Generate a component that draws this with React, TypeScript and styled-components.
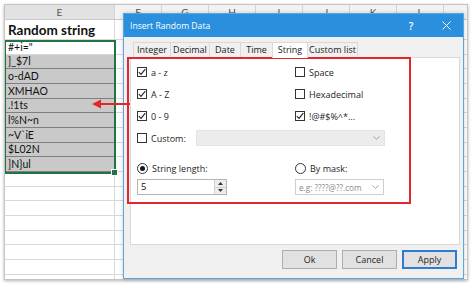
import React from 'react';
import styled, { createGlobalStyle } from 'styled-components';

const GlobalStyle = createGlobalStyle`
  html, body {
    margin: 0;
    padding: 0;
    background: #ffffff;
  }
  body {
    width: 474px;
    height: 288px;
    overflow: hidden;
    font-family: "Open Sans", "Noto Sans", sans-serif;
  }
`;

const Page = styled.div`
  position: relative;
  width: 474px;
  height: 288px;
  padding: 4px 6px 0 4px;
  box-sizing: border-box;
`;

/* ---------- spreadsheet behind the dialog ---------- */

const Sheet = styled.div`
  position: relative;
  width: 464px;
  height: 276px;
  border: 1px solid #c4c4c4;
  box-sizing: border-box;
  box-shadow: 0 1px 3px rgba(0, 0, 0, 0.3);
  overflow: hidden;
  background: #ffffff;
`;

const HeaderRow = styled.div`
  display: flex;
  height: 15px;
  background: #f3f3f3;
  border-bottom: 1px solid #c9c9c9;
  box-sizing: border-box;
`;

const HeaderCell = styled.div<{ $w: number; $active?: boolean }>`
  flex: 0 0 ${(p) => p.$w}px;
  box-sizing: border-box;
  border-right: 1px solid #d4d4d4;
  background: ${(p) => (p.$active ? '#e2e2e2' : 'transparent')};
  color: #555;
  font-family: "Lato", sans-serif;
  font-size: 10px;
  line-height: 14px;
  text-align: center;
`;

const Row = styled.div<{ $h: number }>`
  display: flex;
  height: ${(p) => p.$h}px;
`;

const Cell = styled.div<{ $w: number; $fill?: boolean; $title?: boolean }>`
  flex: 0 0 ${(p) => p.$w}px;
  box-sizing: border-box;
  padding-left: 3px;
  border-right: 1px solid ${(p) => (p.$fill ? '#9a9a9a' : '#d9d9d9')};
  border-bottom: 1px solid ${(p) => (p.$fill ? '#7f7f7f' : '#d9d9d9')};
  background: ${(p) => (p.$fill ? '#c9c9c9' : '#ffffff')};
  color: #111;
  font-family: "Lato", sans-serif;
  font-size: ${(p) => (p.$title ? '13.5px' : '10.5px')};
  font-weight: ${(p) => (p.$title ? 700 : 400)};
  display: flex;
  align-items: center;
  white-space: nowrap;
  overflow: hidden;
`;

const Selection = styled.div`
  position: absolute;
  left: -1px;
  top: 35px;
  width: 112px;
  height: 134px;
  border: 2px solid #217346;
  box-sizing: border-box;
  pointer-events: none;

  &::after {
    content: '';
    position: absolute;
    right: -4px;
    bottom: -4px;
    width: 5px;
    height: 5px;
    background: #217346;
    border: 1px solid #fff;
  }
`;

/* ---------- dialog ---------- */

const Dialog = styled.div`
  position: absolute;
  left: 123px;
  top: 13px;
  width: 341px;
  height: 266px;
  box-sizing: border-box;
  border: 1px solid #5aa7df;
  background: #f0f0f0;
  display: flex;
  flex-direction: column;
  box-shadow: 0 0 4px rgba(0, 0, 0, 0.2);
`;

const TitleBar = styled.div`
  height: 23px;
  flex: 0 0 23px;
  background: #2a8fdc;
  color: #fff;
  display: flex;
  align-items: center;
  padding-left: 6px;
  font-size: 8.6px;
`;

const TitleText = styled.span`
  flex: 1;
`;

const TitleButton = styled.span<{ $w: number }>`
  width: ${(p) => p.$w}px;
  display: flex;
  justify-content: center;
  align-items: center;
  font-size: 10px;
  font-weight: 600;
`;

const Body = styled.div`
  flex: 1;
  display: flex;
  flex-direction: column;
  padding: 5px 3px 0 6px;
`;

const TabStrip = styled.div`
  display: flex;
  align-items: flex-end;
  height: 15px;
  padding-left: 3px;
`;

const Tab = styled.div<{ $w: number; $active?: boolean }>`
  position: relative;
  width: ${(p) => p.$w}px;
  height: ${(p) => (p.$active ? 16 : 15)}px;
  margin-bottom: ${(p) => (p.$active ? -1 : 0)}px;
  margin-right: -1px;
  box-sizing: border-box;
  border: 1px solid #d9d9d9;
  border-bottom: none;
  background: ${(p) => (p.$active ? '#ffffff' : '#f0f0f0')};
  z-index: ${(p) => (p.$active ? 1 : 0)};
  font-size: 9px;
  line-height: 14px;
  text-align: center;
  color: #222;
`;

const Panel = styled.div`
  height: 188px;
  box-sizing: border-box;
  background: #ffffff;
  border: 1px solid #d9d9d9;
  padding: 3px 0 0 6px;
  display: flex;
  flex-direction: column;
`;

const OptionRow = styled.div<{ $h?: number; $mt?: number }>`
  display: grid;
  grid-template-columns: 158px 1fr;
  height: ${(p) => p.$h ?? 22}px;
  margin-top: ${(p) => p.$mt ?? 0}px;
  align-items: center;
`;

const CustomRow = styled.div`
  display: flex;
  align-items: center;
  height: 22px;
`;

const Option = styled.label<{ $w?: number }>`
  display: flex;
  align-items: center;
  gap: 4px;
  width: ${(p) => (p.$w ? `${p.$w}px` : 'auto')};
  font-size: 9px;
  color: #1e1e1e;
  white-space: nowrap;
`;

const Box = styled.span`
  width: 10px;
  height: 10px;
  box-sizing: border-box;
  border: 1px solid #333;
  background: #fff;
  display: flex;
  align-items: center;
  justify-content: center;
`;

const Radio = styled.span<{ $on?: boolean }>`
  width: 11px;
  height: 11px;
  box-sizing: border-box;
  border: 1px solid #333;
  border-radius: 50%;
  background: #fff;
  display: flex;
  align-items: center;
  justify-content: center;

  &::after {
    content: '';
    width: 5px;
    height: 5px;
    border-radius: 50%;
    background: ${(p) => (p.$on ? '#1a1a1a' : 'transparent')};
  }
`;

const Combo = styled.div<{ $w: number; $disabled?: boolean }>`
  width: ${(p) => p.$w}px;
  height: 16px;
  box-sizing: border-box;
  border: 1px solid ${(p) => (p.$disabled ? '#e3e3e3' : '#cfcfcf')};
  background: ${(p) => (p.$disabled ? '#ececec' : '#ffffff')};
  display: flex;
  align-items: center;
  justify-content: space-between;
  padding: 0 4px 0 3px;
  font-size: 8.2px;
  color: #8a8a8a;
`;

const SpinBox = styled.div`
  width: 90px;
  height: 16px;
  box-sizing: border-box;
  border: 1px solid #b4b4b4;
  background: #fff;
  display: flex;
`;

const SpinValue = styled.span`
  flex: 1;
  padding-left: 3px;
  font-size: 9.5px;
  line-height: 14px;
  color: #111;
`;

const SpinButtons = styled.div`
  width: 11px;
  display: flex;
  flex-direction: column;
  border-left: 1px solid #d0d0d0;
`;

const SpinHalf = styled.div`
  flex: 1;
  background: #ececec;
  display: flex;
  align-items: center;
  justify-content: center;
  & + & {
    border-top: 1px solid #d0d0d0;
  }
`;

const ButtonRow = styled.div`
  display: flex;
  justify-content: flex-end;
  gap: 5px;
  padding: 5px 3px 0 0;
`;

const Button = styled.div<{ $primary?: boolean }>`
  width: 55px;
  height: 19px;
  box-sizing: border-box;
  border: ${(p) => (p.$primary ? '2px solid #2f7ccf' : '1px solid #adadad')};
  background: #e1e1e1;
  font-size: 9px;
  color: #1e1e1e;
  display: flex;
  align-items: center;
  justify-content: center;
`;

/* ---------- annotations ---------- */

const RedFrame = styled.div`
  position: absolute;
  left: 127px;
  top: 57px;
  width: 284px;
  height: 147px;
  box-sizing: border-box;
  border: 2px solid #e2262c;
  pointer-events: none;
`;

const Arrow = styled.svg`
  position: absolute;
  left: 90px;
  top: 98px;
`;

const Check = () => (
  <svg width="8" height="8" viewBox="0 0 8 8">
    <path d="M0.8 4.2 L3 6.4 L7.3 1.2" fill="none" stroke="#222" strokeWidth="1.1" />
  </svg>
);

const Chevron = () => (
  <svg width="7" height="4" viewBox="0 0 7 4">
    <path d="M0.5 0.5 L3.5 3.3 L6.5 0.5" fill="none" stroke="#9a9a9a" strokeWidth="0.9" />
  </svg>
);

const Tri = ({ up }: { up?: boolean }) => (
  <svg width="5" height="3" viewBox="0 0 5 3">
    <path d={up ? 'M0 3 L2.5 0 L5 3 Z' : 'M0 0 L2.5 3 L5 0 Z'} fill="#333" />
  </svg>
);

const values = ['#+i="', ']_$7l', 'o-dAD', 'XMHAO', '.!1ts', 'l%N~n', '~V`iE', '$L02N', ']N}ul'];
// the last column runs off the right edge, so its letter is not shown
const otherCols = ['F', 'G', 'H', 'I', 'J', 'K', 'L', ''];
const tabs = [
  { label: 'Integer', w: 38 },
  { label: 'Decimal', w: 40 },
  { label: 'Date', w: 32 },
  { label: 'Time', w: 33 },
  { label: 'String', w: 36, active: true },
  { label: 'Custom list', w: 51 },
];

const OtherCells = () => (
  <>
    {otherCols.map((c, i) => (
      <Cell key={i} $w={47} />
    ))}
  </>
);

const App: React.FC = () => {
  return (
    <Page>
      <GlobalStyle />
      <Sheet>
        <HeaderRow>
          <HeaderCell $w={110} $active>
            E
          </HeaderCell>
          {otherCols.map((c, i) => (
            <HeaderCell key={i} $w={47}>
              {c}
            </HeaderCell>
          ))}
        </HeaderRow>
        <Row $h={20}>
          <Cell $w={110} $title>
            Random string
          </Cell>
          <OtherCells />
        </Row>
        {values.map((v, i) => (
          <Row key={v} $h={14.67}>
            <Cell $w={110} $fill={i > 0}>
              {v}
            </Cell>
            <OtherCells />
          </Row>
        ))}
        {Array.from({ length: 8 }).map((_, i) => (
          <Row key={`e${i}`} $h={14.67}>
            <Cell $w={110} />
            <OtherCells />
          </Row>
        ))}
        <Selection />
      </Sheet>

      <Dialog>
        <TitleBar>
          <TitleText>Insert Random Data</TitleText>
          <TitleButton $w={36}>?</TitleButton>
          <TitleButton $w={34}>
            <svg width="9" height="9" viewBox="0 0 9 9">
              <path d="M0.5 0.5 L8.5 8.5 M8.5 0.5 L0.5 8.5" stroke="#fff" strokeWidth="1" />
            </svg>
          </TitleButton>
        </TitleBar>
        <Body>
          <TabStrip>
            {tabs.map((t) => (
              <Tab key={t.label} $w={t.w} $active={t.active}>
                {t.label}
              </Tab>
            ))}
          </TabStrip>
          <Panel>
            <OptionRow>
              <Option>
                <Box>
                  <Check />
                </Box>
                a - z
              </Option>
              <Option>
                <Box />
                Space
              </Option>
            </OptionRow>
            <OptionRow>
              <Option>
                <Box>
                  <Check />
                </Box>
                A - Z
              </Option>
              <Option>
                <Box />
                Hexadecimal
              </Option>
            </OptionRow>
            <OptionRow>
              <Option>
                <Box>
                  <Check />
                </Box>
                0 - 9
              </Option>
              <Option>
                <Box>
                  <Check />
                </Box>
                !@#$%^*...
              </Option>
            </OptionRow>
            <CustomRow>
              <Option $w={59}>
                <Box />
                Custom:
              </Option>
              <Combo $w={189} $disabled>
                <span />
                <Chevron />
              </Combo>
            </CustomRow>
            <OptionRow $mt={8}>
              <Option>
                <Radio $on />
                String length:
              </Option>
              <Option>
                <Radio />
                By mask:
              </Option>
            </OptionRow>
            <OptionRow $h={16}>
              <SpinBox>
                <SpinValue>5</SpinValue>
                <SpinButtons>
                  <SpinHalf>
                    <Tri up />
                  </SpinHalf>
                  <SpinHalf>
                    <Tri />
                  </SpinHalf>
                </SpinButtons>
              </SpinBox>
              <Combo $w={89}>
                <span>e.g: ????@??.com</span>
                <Chevron />
              </Combo>
            </OptionRow>
          </Panel>
          <ButtonRow>
            <Button>Ok</Button>
            <Button>Cancel</Button>
            <Button $primary>Apply</Button>
          </ButtonRow>
        </Body>
      </Dialog>

      <RedFrame />
      <Arrow width="40" height="12" viewBox="0 0 40 12">
        <line x1="4" y1="6" x2="40" y2="6" stroke="#e2262c" strokeWidth="2" />
        <path d="M2 6 L11 1.5 L11 10.5 Z" fill="#e2262c" />
      </Arrow>
    </Page>
  );
};

export default App;
